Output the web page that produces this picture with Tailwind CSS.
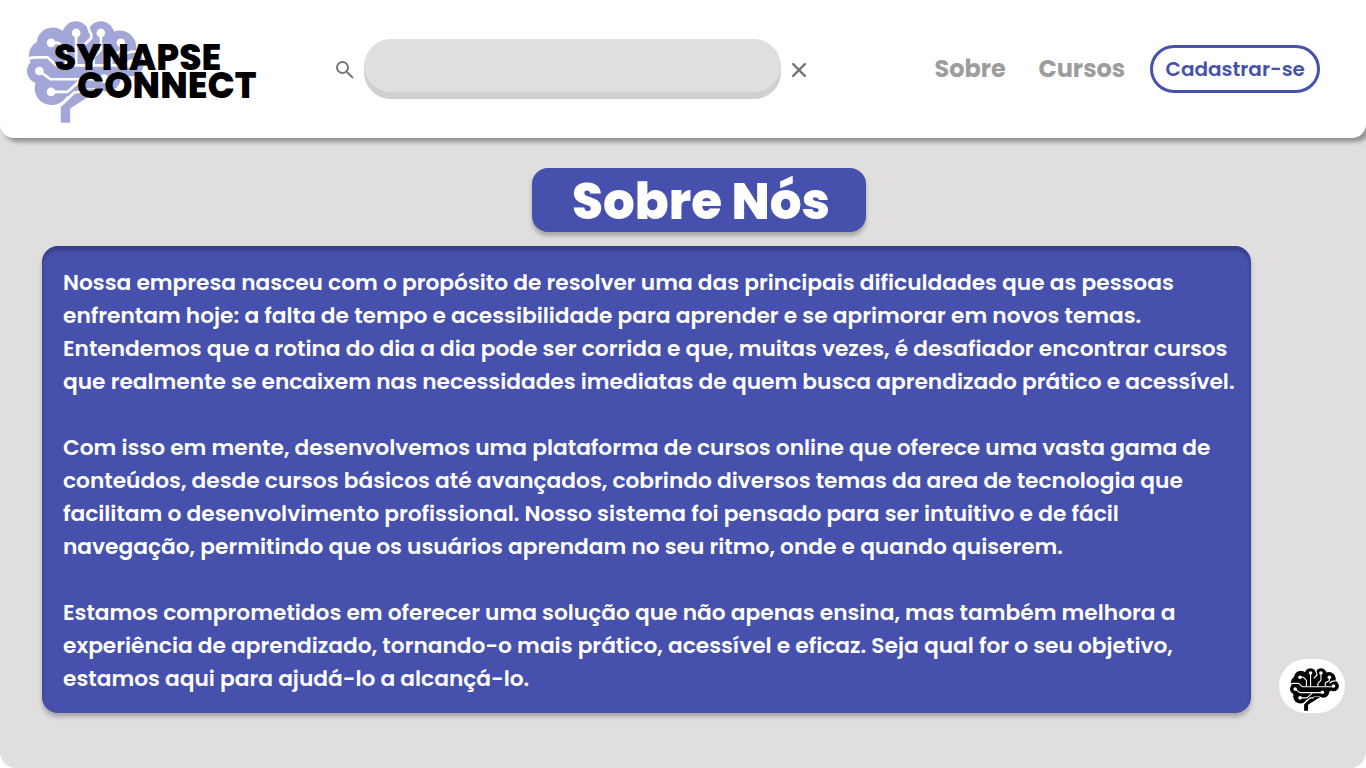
<!DOCTYPE html>
<html lang="pt-BR">
<head>
<meta charset="utf-8">
<title>Synapse Connect</title>
<script src="https://cdn.jsdelivr.net/npm/@tailwindcss/browser@4"></script>
</head>
<body class="bg-white font-['Poppins','Inter',sans-serif]">
<svg class="hidden">
  <symbol id="brain" viewBox="51 32 350 308" preserveAspectRatio="none">
    <g fill="currentColor">
      <circle cx="89" cy="183" r="38"/><circle cx="125" cy="235" r="51"/>
      <circle cx="104" cy="136" r="47"/><circle cx="128" cy="100" r="48"/>
      <circle cx="197" cy="73" r="40"/><circle cx="272" cy="73" r="40"/>
      <circle cx="328" cy="111" r="50"/><circle cx="350" cy="140" r="34"/><circle cx="362" cy="161" r="38"/>
      <circle cx="290" cy="204" r="41"/>
      <path d="M103 90H340V200H320L300 235H225L180 260H90V150Z"/>
      <path d="M152 339V291L206 238H270L180 296V339Z"/>
    </g>
    <g fill="none" stroke="var(--line)" stroke-width="8" stroke-linejoin="round">
      <path d="M48 150Q60 142 75 142H113L138 166H362"/>
      <path d="M88 183L121 208H280"/>
      <path d="M123 246H172L210 212"/>
      <path d="M145 293L192 248L222 244"/>
      <path d="M123 98H146L168 120V165M198 68V165M272 68V120L250 142V165M332 98V122L303 140V165"/>
      <path d="M236 36Q232 56 243 72V84L220 106M334 140Q346 124 378 124"/>
    </g>
    <g fill="var(--line)">
      <circle cx="88" cy="183" r="13"/><circle cx="123" cy="246" r="13"/><circle cx="123" cy="98" r="13"/>
      <circle cx="198" cy="68" r="13"/><circle cx="272" cy="68" r="13"/><circle cx="332" cy="98" r="13"/>
      <circle cx="362" cy="161" r="13"/><circle cx="282" cy="206" r="13"/>
    </g>
  </symbol>
</svg>
<div class="relative w-[1366px] h-[768px] rounded-b-2xl bg-[#e0dedf] overflow-hidden">
  <header class="relative h-[138px] bg-white rounded-b-[14px] shadow-[4px_4px_4px_rgba(0,0,0,0.35)] flex items-center">
    <div class="relative w-[260px] h-full">
      <svg class="absolute left-[27px] top-[21px] w-[117px] h-[102px] text-[#a2a7d7] [--line:white]"><use href="#brain"/></svg>
      <div class="absolute left-[54px] top-[44px] text-[36px] leading-7 font-extrabold text-black whitespace-nowrap"><span>SYNAPSE</span><br><span class="ml-[23px]">CONNECT</span></div>
    </div>
    <svg class="ml-[76px] mt-px w-[18px] h-[18px]" viewBox="0 0 18 18" fill="none" stroke="#79747e" stroke-width="2"><circle cx="6.5" cy="6.5" r="5.5"/><path d="M10.7 10.7L17 17"/></svg>
    <div class="ml-[10px] w-[417px] h-[60px] rounded-[27px] bg-[#e0dedf] shadow-[inset_0_-7px_0_#d0d0d0]"></div>
    <svg class="ml-[11px] mt-px w-[14px] h-[14px]" viewBox="0 0 14 14" stroke="#79747e" stroke-width="2.4" stroke-linecap="round"><path d="M1.2 1.2L12.8 12.8M12.8 1.2L1.2 12.8"/></svg>
    <nav class="ml-[128.5px] flex items-center text-2xl font-bold text-[#9d9d9d]">
      <a>Sobre</a><a class="ml-[32.5px]">Cursos</a>
      <a class="ml-[25px] w-[170px] h-12 border-3 border-[#4551ad] rounded-full flex items-center justify-center text-[20px] font-semibold text-[#4551ad]">Cadastrar-se</a>
    </nav>
  </header>
  <main>
    <h1 class="mt-[30px] ml-[532px] w-[334px] h-16 pl-1 pt-0.5 rounded-2xl bg-[#4551ad] text-white text-[50px] font-extrabold flex items-center justify-center shadow-[0_4px_4px_rgba(0,0,0,0.25)]">Sobre Nós</h1>
    <section class="mt-[14px] ml-[41.5px] w-[1209.5px] h-[467px] rounded-2xl bg-[#4551ad] text-white text-[21.72px] leading-[33px] font-semibold pl-[21.5px] pt-5 whitespace-nowrap shadow-[0_4px_4px_rgba(0,0,0,0.25),inset_0_4px_4px_rgba(0,0,0,0.25)]">
      <p>Nossa empresa nasceu com o propósito de resolver uma das principais dificuldades que as pessoas<br>enfrentam hoje: a falta de tempo e acessibilidade para aprender e se aprimorar em novos temas.<br>Entendemos que a rotina do dia a dia pode ser corrida e que, muitas vezes, é desafiador encontrar cursos<br>que realmente se encaixem nas necessidades imediatas de quem busca aprendizado prático e acessível.</p>
      <p class="mt-[33px]">Com isso em mente, desenvolvemos uma plataforma de cursos online que oferece uma vasta gama de<br>conteúdos, desde cursos básicos até avançados, cobrindo diversos temas da area de tecnologia que<br>facilitam o desenvolvimento profissional. Nosso sistema foi pensado para ser intuitivo e de fácil<br>navegação, permitindo que os usuários aprendam no seu ritmo, onde e quando quiserem.</p>
      <p class="mt-[33px]">Estamos comprometidos em oferecer uma solução que não apenas ensina, mas também melhora a<br>experiência de aprendizado, tornando-o mais prático, acessível e eficaz. Seja qual for o seu objetivo,<br>estamos aqui para ajudá-lo a alcançá-lo.</p>
    </section>
  </main>
  <button class="absolute left-[1279px] top-[659px] w-[66px] h-[54px] rounded-[27px] bg-white text-black [--line:white]"><svg class="absolute left-[11px] top-[9px] w-[49px] h-[43px]"><use href="#brain"/></svg></button>
</div>
</body>
</html>
